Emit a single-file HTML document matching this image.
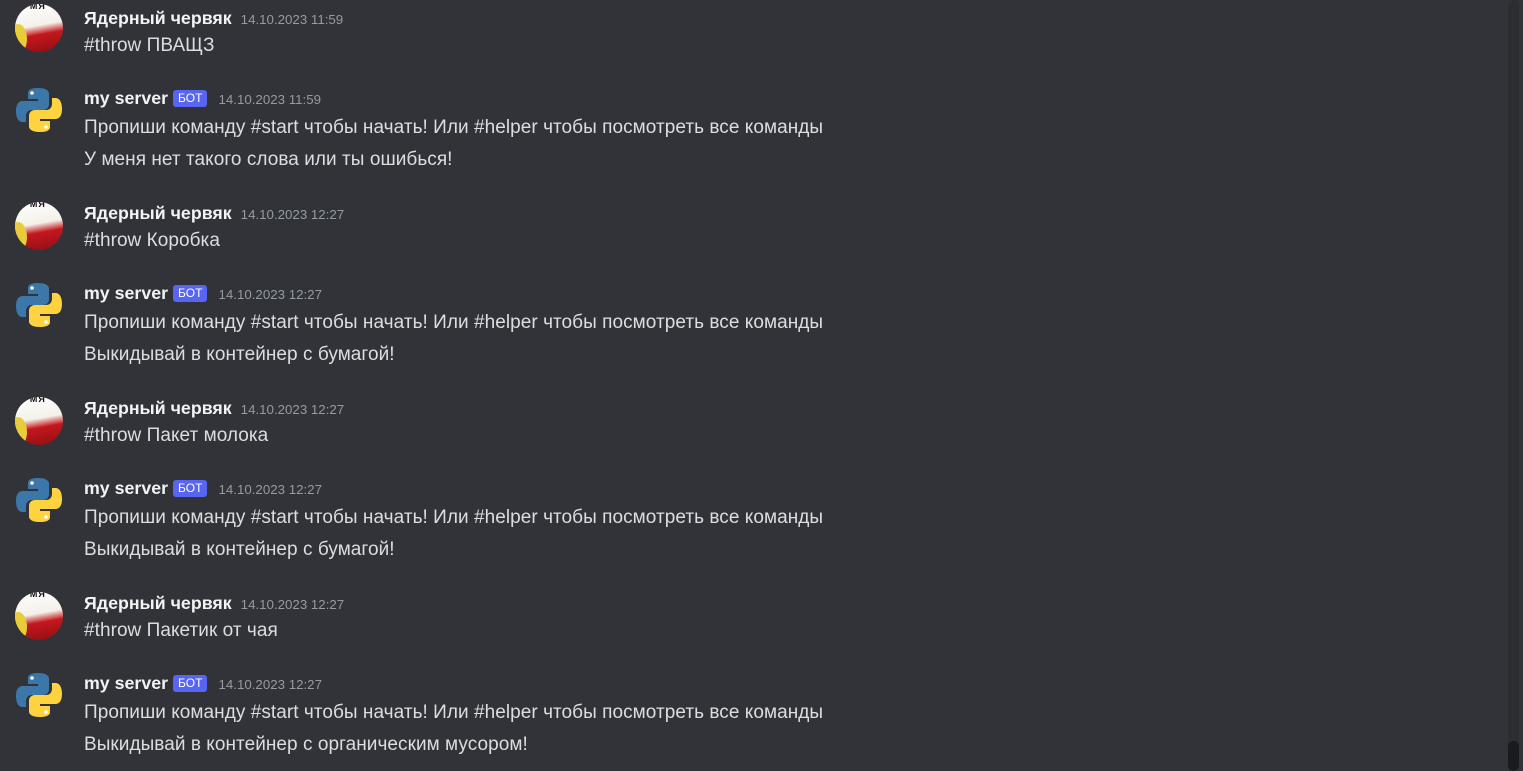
<!DOCTYPE html>
<html><head><meta charset="utf-8"><style>
body{margin:0;width:1523px;height:767px;background:#313338;overflow:hidden;position:relative;font-family:"Liberation Sans","DejaVu Sans",sans-serif;}
.a{position:absolute;left:15px;width:48px;height:48px;border-radius:50%;overflow:hidden}
.u{background:linear-gradient(170deg,#fff 0%,#f4f1ea 45%,#c4171e 62%,#8e0f14 100%)}
.u:before{content:"";position:absolute;left:-6px;top:20px;width:18px;height:30px;background:#e8cc3a;border-radius:50%}
.u:after{content:"РМЯ";position:absolute;left:8px;top:-3px;font:bold 9px "Liberation Sans",sans-serif;color:#111;letter-spacing:1px}
.p{position:absolute;left:14px;width:50px;height:48px}
.n{position:absolute;left:84px;font-size:17.8px;font-weight:bold;color:#f2f3f5;white-space:nowrap;line-height:20px}
.t{font-size:13.3px;color:#949ba4;font-weight:normal;margin-left:9px}
.b{display:inline-block;background:#5865f2;color:#fff;font-size:12px;font-weight:normal;padding:0 5px;height:17px;line-height:17px;border-radius:3px;vertical-align:2px;margin-left:5px}
.b+.t{margin-left:11px}
.m{position:absolute;left:84px;font-size:19px;color:#dbdee1;white-space:nowrap;line-height:22px;letter-spacing:0.05px;margin-top:2px}
.tr{position:absolute;left:1508px;top:0;width:11px;height:767px;background:#2b2d31;border-radius:6px}
.th{position:absolute;left:1508px;top:741px;width:11px;height:30px;background:#1a1b1e;border-radius:6px}
</style></head><body>
<svg width="0" height="0" style="position:absolute"><defs>
<g id="py"><path d="M24 2c-11 0-10 5-10 5v6h10v2H9S2 14 2 25s6 11 6 11h4v-6s0-6 6-6h11s6 0 6-6V8s1-6-11-6z" fill="#3b77a8"/><circle cx="18" cy="7" r="1.8" fill="#fff"/><path d="M26 46c11 0 10-5 10-5v-6H26v-2h15s7 1 7-10-6-11-6-11h-4v6s0 6-6 6H21s-6 0-6 6v10s-1 6 11 6z" fill="#fdd440"/><circle cx="32" cy="41" r="1.8" fill="#fff"/></g>
</defs></svg>

<div class="a u" style="top:4px"></div>
<div class="n" style="top:8px">Ядерный червяк<span class="t">14.10.2023 11:59</span></div>
<div class="m" style="top:33px">#throw ПВАЩЗ</div>
<svg class="p" style="top:86px" viewBox="0 0 50 48"><use href="#py"/></svg>
<div class="n" style="top:88px">my server<span class="b">БОТ</span><span class="t">14.10.2023 11:59</span></div>
<div class="m" style="top:115px">Пропиши команду #start чтобы начать! Или #helper чтобы посмотреть все команды</div>
<div class="m" style="top:147px">У меня нет такого слова или ты ошибься!</div>

<div class="a u" style="top:202px"></div>
<div class="n" style="top:203px">Ядерный червяк<span class="t">14.10.2023 12:27</span></div>
<div class="m" style="top:228px">#throw Коробка</div>
<svg class="p" style="top:281px" viewBox="0 0 50 48"><use href="#py"/></svg>
<div class="n" style="top:283px">my server<span class="b">БОТ</span><span class="t">14.10.2023 12:27</span></div>
<div class="m" style="top:310px">Пропиши команду #start чтобы начать! Или #helper чтобы посмотреть все команды</div>
<div class="m" style="top:342px">Выкидывай в контейнер с бумагой!</div>

<div class="a u" style="top:397px"></div>
<div class="n" style="top:398px">Ядерный червяк<span class="t">14.10.2023 12:27</span></div>
<div class="m" style="top:423px">#throw Пакет молока</div>
<svg class="p" style="top:476px" viewBox="0 0 50 48"><use href="#py"/></svg>
<div class="n" style="top:478px">my server<span class="b">БОТ</span><span class="t">14.10.2023 12:27</span></div>
<div class="m" style="top:505px">Пропиши команду #start чтобы начать! Или #helper чтобы посмотреть все команды</div>
<div class="m" style="top:537px">Выкидывай в контейнер с бумагой!</div>

<div class="a u" style="top:592px"></div>
<div class="n" style="top:593px">Ядерный червяк<span class="t">14.10.2023 12:27</span></div>
<div class="m" style="top:618px">#throw Пакетик от чая</div>
<svg class="p" style="top:671px" viewBox="0 0 50 48"><use href="#py"/></svg>
<div class="n" style="top:673px">my server<span class="b">БОТ</span><span class="t">14.10.2023 12:27</span></div>
<div class="m" style="top:700px">Пропиши команду #start чтобы начать! Или #helper чтобы посмотреть все команды</div>
<div class="m" style="top:732px">Выкидывай в контейнер с органическим мусором!</div>

<div class="tr"></div><div class="th"></div>
</body></html>
